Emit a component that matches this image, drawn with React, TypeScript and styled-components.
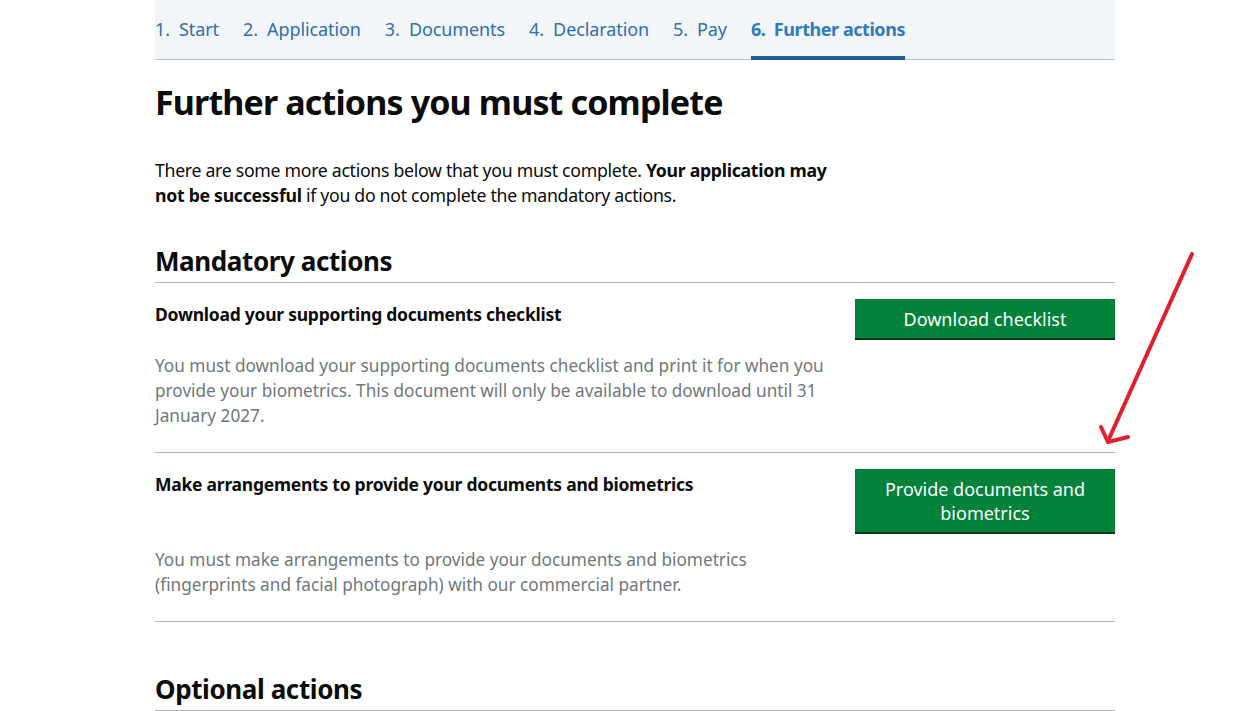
import React from "react";
import styled, { createGlobalStyle } from "styled-components";

const GlobalStyle = createGlobalStyle`
  html, body { margin: 0; padding: 0; background: #ffffff; }
  body { font-family: "Noto Sans", "Liberation Sans", Arial, sans-serif; color: #0b0c0c; }
  * { box-sizing: border-box; }
`;

const Page = styled.div`
  position: relative;
  width: 1239px;
  height: 711px;
  overflow: hidden;
  padding-left: 155px;
`;

const Column = styled.div`
  width: 960px;
`;

const Steps = styled.nav`
  display: flex;
  align-items: stretch;
  gap: 24px;
  height: 60px;
  background: #f3f6f9;
  border-bottom: 1px solid #a7c1d4;
`;

const Step = styled.a<{ $active?: boolean }>`
  display: flex;
  align-items: center;
  padding-top: 2px;
  font-size: 18px;
  letter-spacing: ${(p) => (p.$active ? "-0.45px" : "-0.1px")};
  white-space: pre;
  color: ${(p) => (p.$active ? "#2f7ab8" : "#2e6fa8")};
  font-weight: ${(p) => (p.$active ? 700 : 400)};
  text-decoration: none;
  border-bottom: 4px solid ${(p) => (p.$active ? "#1f5f9c" : "transparent")};
  margin-bottom: -1px;
`;

const Title = styled.h1`
  margin: 22px 0 0;
  font-size: 34px;
  line-height: 40px;
  font-weight: 700;
  letter-spacing: -0.85px;
`;

const Lead = styled.p`
  margin: 36px 0 0;
  width: 690px;
  font-size: 17.7px;
  line-height: 25px;
  letter-spacing: -0.3px;
  strong { font-weight: 700; }
`;

const SectionHeading = styled.h2<{ $top: number }>`
  margin: ${(p) => p.$top}px 0 0;
  padding-bottom: 5px;
  font-size: 26px;
  line-height: 32px;
  font-weight: 700;
  letter-spacing: -0.4px;
  border-bottom: 1px solid #b1b4b6;
`;

const ActionRow = styled.section`
  padding: 16px 0 24px;
  border-bottom: 1px solid #b1b4b6;
`;

const ActionTop = styled.div`
  display: flex;
  justify-content: space-between;
  align-items: flex-start;
`;

const ActionTitle = styled.h3`
  margin: 3px 0 0;
  font-size: 17.5px;
  line-height: 24px;
  font-weight: 700;
  letter-spacing: -0.25px;
`;

const GreenButton = styled.a`
  display: block;
  width: 260px;
  padding: 8px 24px 7px;
  background: #00823b;
  box-shadow: 0 2px 0 #003618;
  color: #ffffff;
  font-size: 18px;
  line-height: 24px;
  text-align: center;
  text-decoration: none;
`;

const Description = styled.p`
  margin: 15px 0 0;
  width: 690px;
  font-size: 17.2px;
  line-height: 25px;
  color: #6f777b;
`;

const Arrow = styled.svg`
  position: absolute;
  left: 1090px;
  top: 245px;
  width: 115px;
  height: 210px;
  pointer-events: none;
`;

export default function App() {
  return (
    <>
      <GlobalStyle />
      <Page>
        <Column>
          <Steps>
            <Step>1.  Start</Step>
            <Step>2.  Application</Step>
            <Step>3.  Documents</Step>
            <Step>4.  Declaration</Step>
            <Step>5.  Pay</Step>
            <Step $active>6.  Further actions</Step>
          </Steps>

          <Title>Further actions you must complete</Title>

          <Lead>
            There are some more actions below that you must complete. <strong>Your application may not be successful</strong> if you do not complete the mandatory actions.
          </Lead>

          <SectionHeading $top={37}>Mandatory actions</SectionHeading>

          <ActionRow>
            <ActionTop>
              <ActionTitle>Download your supporting documents checklist</ActionTitle>
              <GreenButton>Download checklist</GreenButton>
            </ActionTop>
            <Description>
              You must download your supporting documents checklist and print it for when you provide your biometrics. This document will only be available to download until 31 January 2027.
            </Description>
          </ActionRow>

          <ActionRow>
            <ActionTop>
              <ActionTitle>Make arrangements to provide your documents and biometrics</ActionTitle>
              <GreenButton>Provide documents and biometrics</GreenButton>
            </ActionTop>
            <Description>
              You must make arrangements to provide your documents and biometrics (fingerprints and facial photograph) with our commercial partner.
            </Description>
          </ActionRow>

          <SectionHeading $top={51}>Optional actions</SectionHeading>
        </Column>

        <Arrow viewBox="1090 245 115 210">
          <g stroke="#e0202e" strokeWidth="4" strokeLinecap="round" fill="none">
            <line x1="1192" y1="254" x2="1108" y2="441" />
            <line x1="1101" y1="427" x2="1108" y2="442" />
            <line x1="1108" y1="442" x2="1128" y2="437" />
          </g>
        </Arrow>
      </Page>
    </>
  );
}
